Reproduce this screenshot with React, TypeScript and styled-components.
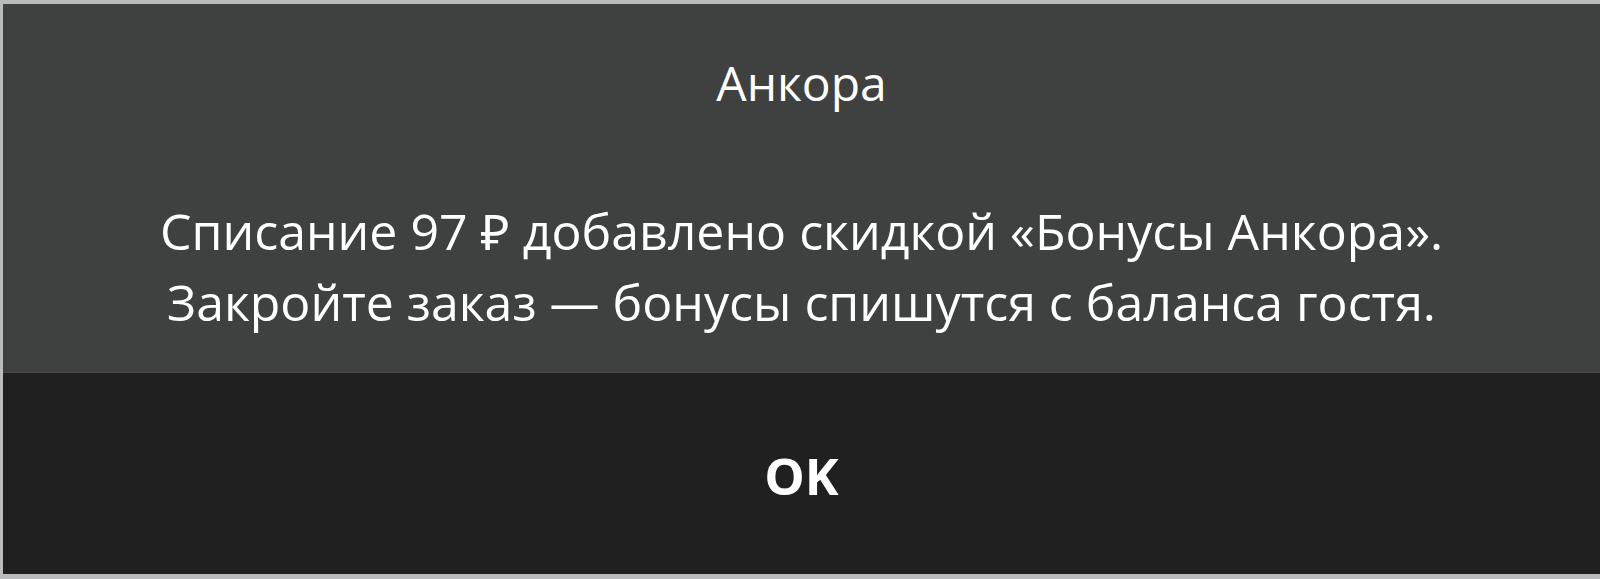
import React from "react";
import styled, {createGlobalStyle} from "styled-components";

const GlobalStyle = createGlobalStyle`
  html, body {
    margin: 0;
    padding: 0;
    background: #b9bbbd;
    overflow: hidden;
  }
`

export default function App() {
    return (
        <Page>
            <GlobalStyle />
            <Dialog>
                <Body>
                    <Title>Анкора</Title>
                    <Message>
                        Списание 97 ₽ добавлено скидкой «Бонусы Анкора».
                        <br />
                        Закройте заказ — бонусы спишутся с баланса гостя.
                    </Message>
                </Body>
                <Footer>
                    <OkButton>OK</OkButton>
                </Footer>
            </Dialog>
        </Page>
    )
}

const Page = styled.div`
  width: 1600px;
  height: 579px;
  padding: 4px 0 0 3px;
  box-sizing: border-box;
  font-family: "Open Sans", "Noto Sans", sans-serif;
`

const Dialog = styled.div`
  width: 1597px;
  height: 570px;
  display: flex;
  flex-direction: column;
`

const Body = styled.div`
  height: 369px;
  flex-shrink: 0;
  background: #3f4140;
  border-bottom: 1px solid #484a49;
  display: flex;
  flex-direction: column;
  align-items: center;
  padding-top: 50px;
  box-sizing: border-box;
  color: #ffffff;
`

const Title = styled.div`
  font-size: 48px;
  font-weight: 400;
  line-height: 58px;
  margin-bottom: 84px;
`

const Message = styled.div`
  font-size: 50px;
  line-height: 71px;
  text-align: center;
  white-space: nowrap;
`

const Footer = styled.div`
  flex: 1;
  background: #202020;
  display: flex;
  align-items: center;
  justify-content: center;
`

const OkButton = styled.button`
  background: transparent;
  border: none;
  color: #ffffff;
  font-family: "Open Sans", "Noto Sans", sans-serif;
  font-weight: 700;
  font-size: 51px;
  padding: 0 20px;
  margin-top: 2px;
  cursor: pointer;
`
